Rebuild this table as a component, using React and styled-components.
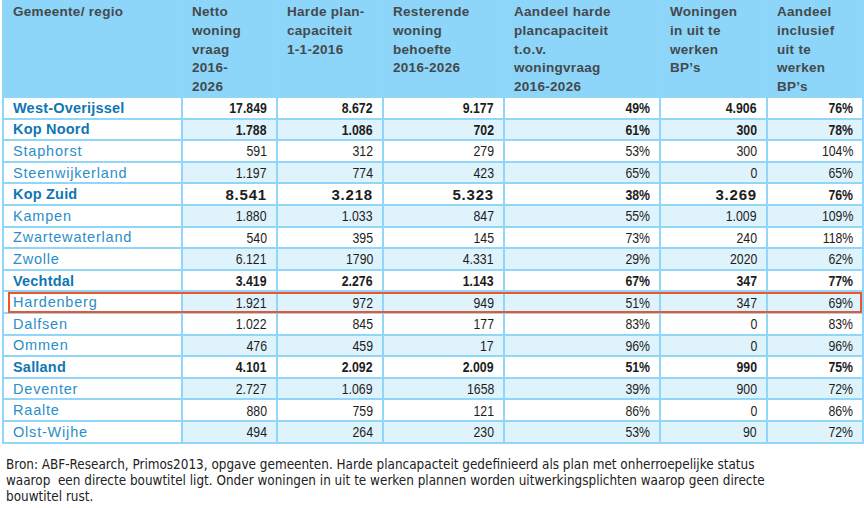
import React from "react";
import styled, { createGlobalStyle, css } from "styled-components";

const Global = createGlobalStyle`
  html, body { margin: 0; padding: 0; background: #ffffff; overflow: hidden; }
  body { font-family: "Liberation Sans", Arial, sans-serif; }
`;

const LINE = "#8fd6f8";
const HEAD_BG = "#8dd6fa";
const SHADE = "#dff3fc";

const Page = styled.div`
  width: 864px;
  height: 508px;
  padding-left: 2px;
  box-sizing: border-box;
`;

const Table = styled.div`
  display: flex;
  flex-direction: column;
  gap: 2px;
  width: 860px;
  padding: 0 2px 2px 2px;
  background: ${LINE};
`;

const Row = styled.div`
  display: grid;
  grid-template-columns: 177px 93px 104px 119px 154px 105px 94px;
  column-gap: 2px;
  height: ${(p) => (p.$head ? "96px" : "19.6px")};
  position: relative;
  ${(p) =>
    p.$highlight &&
    css`
      &::after {
        content: "";
        position: absolute;
        left: 4px;
        right: 2px;
        top: 0;
        bottom: -1px;
        border: 2px solid #f0542c;
        pointer-events: none;
      }
    `}
`;

const HeadCell = styled.div`
  background: ${HEAD_BG};
  color: #44494c;
  font-family: "Liberation Sans", Arial, sans-serif;
  font-weight: 700;
  font-size: 13.5px;
  line-height: 18.8px;
  letter-spacing: 0.3px;
  padding: 3px 0 0 9px;
  white-space: pre-line;
`;

const NameCell = styled.div`
  background: #ffffff;
  color: ${(p) => (p.$bold ? "#0f76b3" : "#2b8ec9")};
  font-weight: ${(p) => (p.$bold ? 700 : 400)};
  font-size: 14.5px;
  letter-spacing: ${(p) => (p.$bold ? "0.2px" : "0.8px")};
  display: flex;
  align-items: center;
  padding-left: 9px;
  white-space: nowrap;
`;

const NumCell = styled.div`
  background: ${(p) => (p.$shade ? SHADE : "#ffffff")};
  color: #1d1d1d;
  font-family: "Liberation Sans", Arial, sans-serif;
  font-weight: ${(p) => (p.$bold ? 700 : 400)};
  font-size: 15px;
  display: flex;
  align-items: center;
  justify-content: flex-end;
  padding-right: 9px;
`;

const NumText = styled.span`
  display: inline-block;
  white-space: nowrap;
  letter-spacing: ${(p) => (p.$wide ? "0.8px" : "0")};
  transform: scaleX(${(p) => (p.$wide ? 1 : 0.82)});
  transform-origin: 100% 50%;
`;

const Note = styled.p`
  margin: 13px 0 0 4px;
  font-family: "DejaVu Sans Condensed", "Liberation Sans", sans-serif;
  font-size: 13.4px;
  line-height: 16px;
  color: #222222;
  white-space: nowrap;
`;

const headers = [
  "Gemeente/ regio",
  "Netto\nwoning\nvraag\n2016-\n2026",
  "Harde plan-\ncapaciteit\n1-1-2016",
  "Resterende\nwoning\nbehoefte\n2016-2026",
  "Aandeel harde\nplancapaciteit\nt.o.v.\nwoningvraag\n2016-2026",
  "Woningen\nin uit te\nwerken\nBP’s",
  "Aandeel\ninclusief\nuit te\nwerken\nBP’s",
];

const rows = [
  { name: "West-Overijssel", bold: true, v: ["17.849", "8.672", "9.177", "49%", "4.906", "76%"] },
  { name: "Kop Noord", bold: true, v: ["1.788", "1.086", "702", "61%", "300", "78%"] },
  { name: "Staphorst", v: ["591", "312", "279", "53%", "300", "104%"] },
  { name: "Steenwijkerland", v: ["1.197", "774", "423", "65%", "0", "65%"] },
  { name: "Kop Zuid", bold: true, wide: [0, 1, 2, 4], v: ["8.541", "3.218", "5.323", "38%", "3.269", "76%"] },
  { name: "Kampen", v: ["1.880", "1.033", "847", "55%", "1.009", "109%"] },
  { name: "Zwartewaterland", v: ["540", "395", "145", "73%", "240", "118%"] },
  { name: "Zwolle", v: ["6.121", "1790", "4.331", "29%", "2020", "62%"] },
  { name: "Vechtdal", bold: true, v: ["3.419", "2.276", "1.143", "67%", "347", "77%"] },
  { name: "Hardenberg", highlight: true, v: ["1.921", "972", "949", "51%", "347", "69%"] },
  { name: "Dalfsen", v: ["1.022", "845", "177", "83%", "0", "83%"] },
  { name: "Ommen", v: ["476", "459", "17", "96%", "0", "96%"] },
  { name: "Salland", bold: true, v: ["4.101", "2.092", "2.009", "51%", "990", "75%"] },
  { name: "Deventer", v: ["2.727", "1.069", "1658", "39%", "900", "72%"] },
  { name: "Raalte", v: ["880", "759", "121", "86%", "0", "86%"] },
  { name: "Olst-Wijhe", v: ["494", "264", "230", "53%", "90", "72%"] },
];

export default function App() {
  return (
    <Page>
      <Global />
      <Table>
        <Row $head>
          {headers.map((h) => (
            <HeadCell key={h}>{h}</HeadCell>
          ))}
        </Row>
        {rows.map((r, i) => {
          return (
            <Row key={r.name} $highlight={r.highlight}>
              <NameCell $bold={r.bold}>{r.name}</NameCell>
              {r.v.map((val, j) => {
                const wide = r.wide ? r.wide.includes(j) : false;
                return (
                  <NumCell key={j} $shade={i % 2 === 1} $bold={r.bold}>
                    <NumText $wide={wide}>{val}</NumText>
                  </NumCell>
                );
              })}
            </Row>
          );
        })}
      </Table>
      <Note>
        Bron: ABF-Research, Primos2013, opgave gemeenten. Harde plancapacteit gedefinieerd als plan met onherroepelijke status
        <br />
        waarop&nbsp; een directe bouwtitel ligt. Onder woningen in uit te werken plannen worden uitwerkingsplichten waarop geen directe
        <br />
        bouwtitel rust.
      </Note>
    </Page>
  );
}
